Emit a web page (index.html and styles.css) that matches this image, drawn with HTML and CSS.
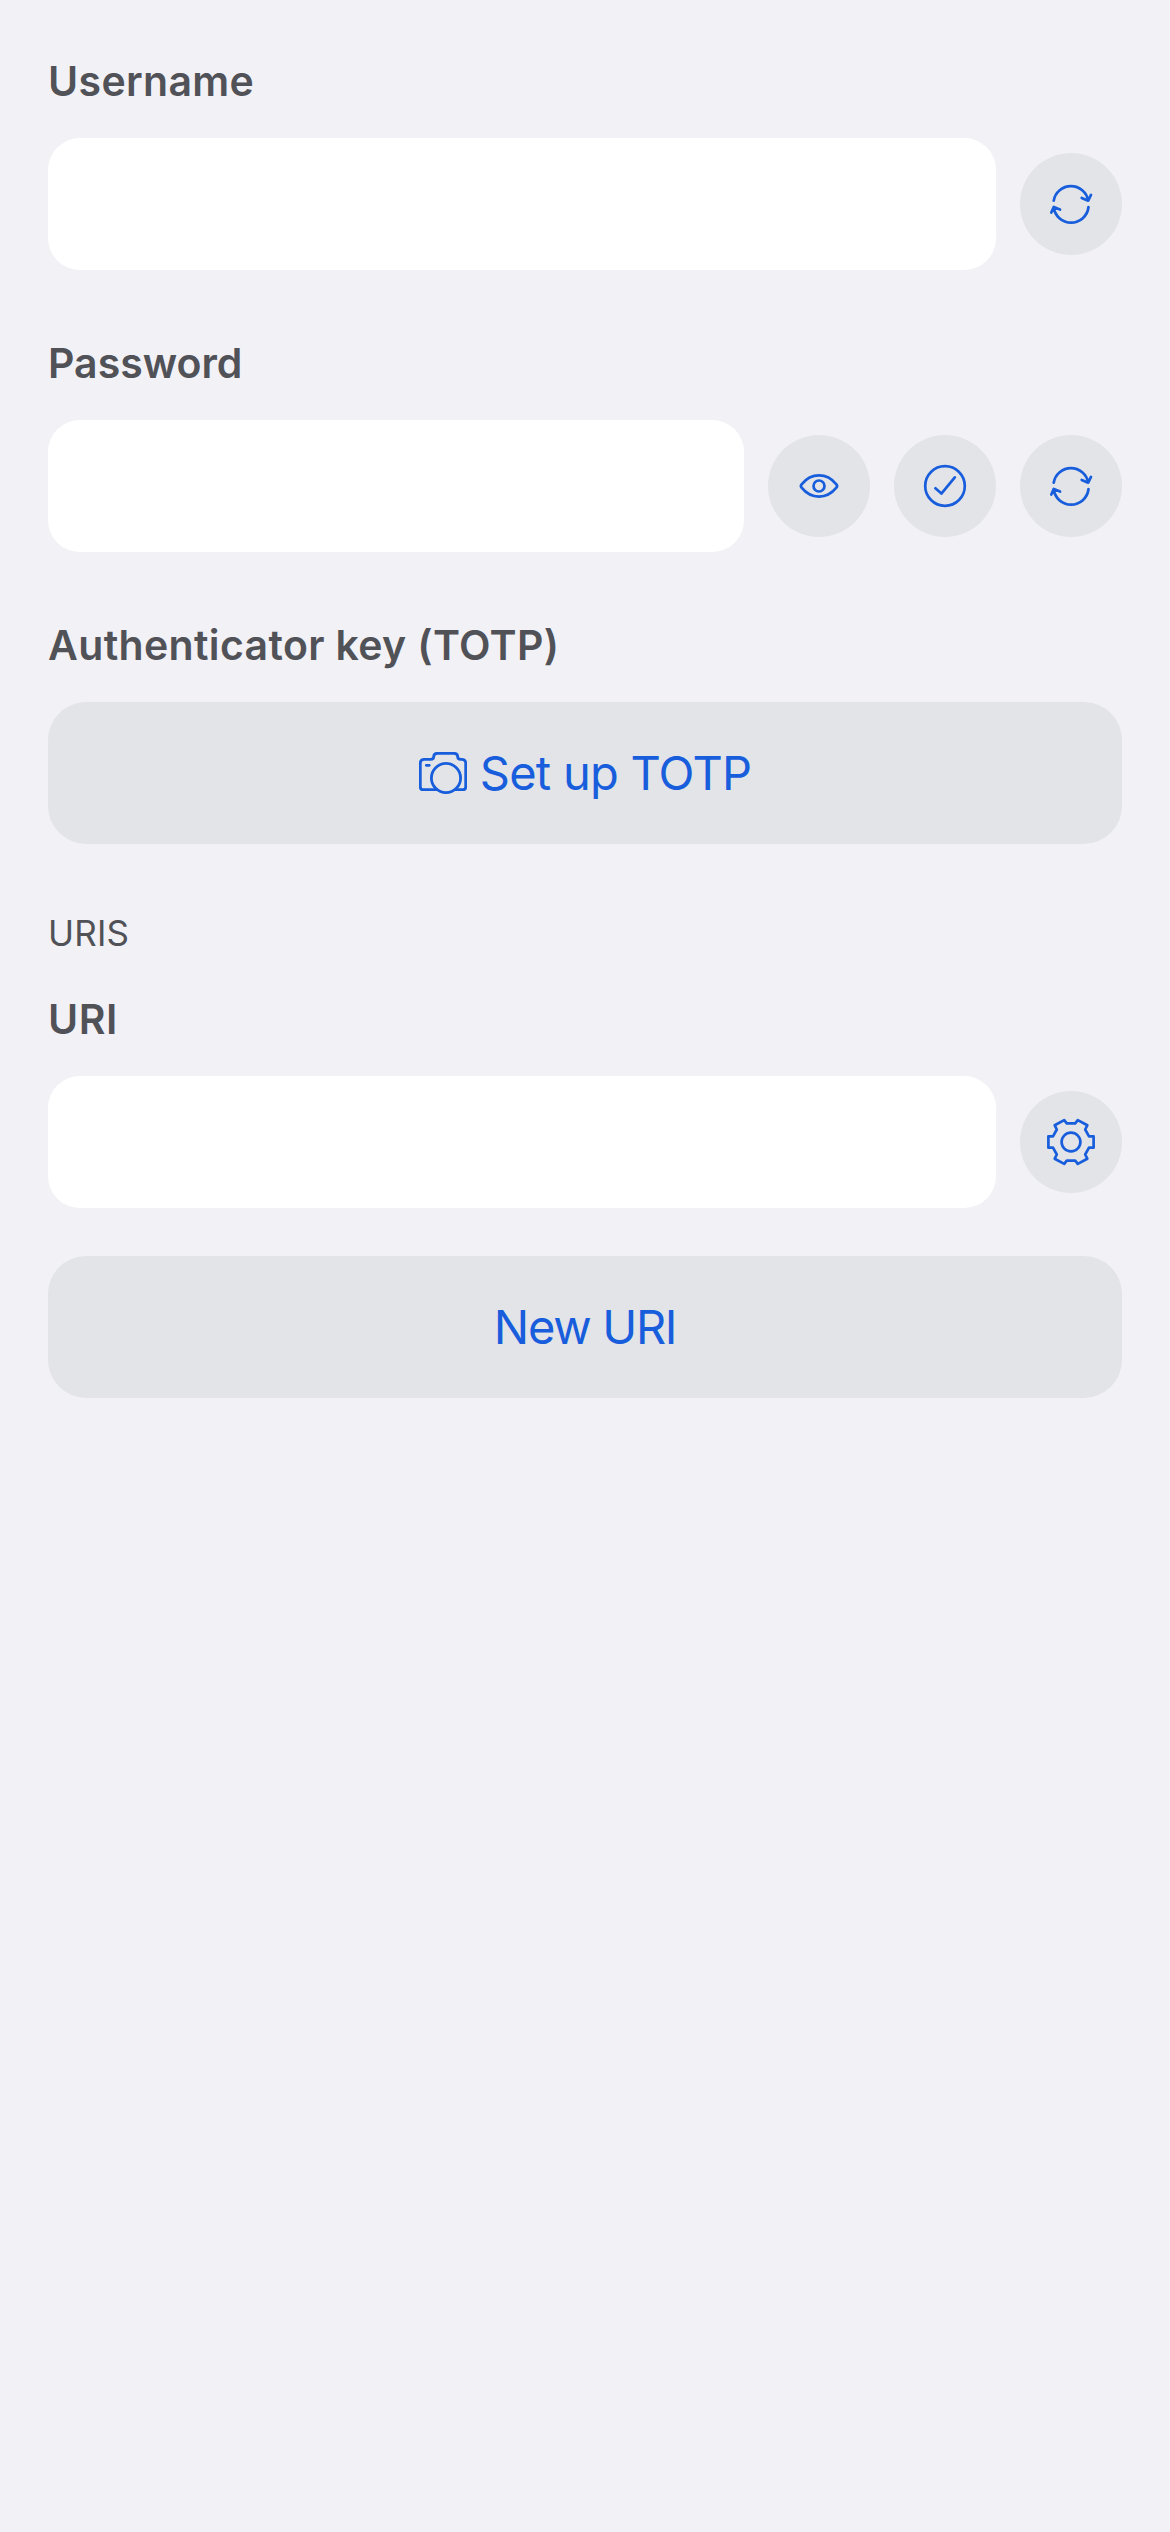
FILE: index.html
```html
<!DOCTYPE html>
<html lang="en">
<head>
<meta charset="utf-8">
<title>New login</title>
<link rel="stylesheet" href="styles.css">
</head>
<body>
<main class="form">
  <section class="group">
    <label class="label label-username" for="username">Username</label>
    <div class="row">
      <input class="field" id="username" type="text">
      <button class="round" aria-label="Generate username">
        <svg class="icon" viewBox="0 0 102 102"><path d="M33.7 47.7A17.5 17.5 0 0 1 68.2 47.7M61.7 44.9L68.2 47.7L71 41.9M68.5 54A17.5 17.5 0 0 1 33.7 54M31.3 59.5L33.8 53.9L40 56.6"/></svg>
      </button>
    </div>
  </section>
  <section class="group">
    <label class="label label-password" for="password">Password</label>
    <div class="row">
      <input class="field" id="password" type="password">
      <button class="round" aria-label="Show password">
        <svg class="icon" viewBox="0 0 102 102"><path d="M33.6 49.3C43.2 37.4 58.8 37.4 68.4 49.3Q69.8 51 68.4 52.7C58.8 64.6 43.2 64.6 33.6 52.7Q32.2 51 33.6 49.3Z"/><circle cx="51" cy="51" r="5.5"/></svg>
      </button>
      <button class="round" aria-label="Check password">
        <svg class="icon" viewBox="0 0 102 102"><circle cx="51" cy="51" r="19.8"/><path d="M41.4 53.3L47.4 58.6L60.8 42.4"/></svg>
      </button>
      <button class="round" aria-label="Generate password">
        <svg class="icon" viewBox="0 0 102 102"><path d="M33.7 47.7A17.5 17.5 0 0 1 68.2 47.7M61.7 44.9L68.2 47.7L71 41.9M68.5 54A17.5 17.5 0 0 1 33.7 54M31.3 59.5L33.8 53.9L40 56.6"/></svg>
      </button>
    </div>
  </section>
  <section class="group">
    <h2 class="label label-totp">Authenticator key (TOTP)</h2>
    <button class="wide">
      <svg class="camera" viewBox="0 0 48 42"><path d="M17.5 37.7H4.3Q1.3 37.7 1.3 34.7V11.3Q1.3 7.3 5.3 7.3H11.7Q14.7 7.3 14.7 4.8Q14.7 1.3 18.7 1.3H34.7Q38.7 1.3 38.7 4.8Q38.7 7.3 41.7 7.3H42.7Q46.7 7.3 46.7 11.3V34.7Q46.7 37.7 43.7 37.7H36.5M7.3 13.3H10.3"/><circle cx="27" cy="26" r="14.6"/></svg>
      <span class="setup-text">Set up TOTP</span>
    </button>
  </section>
  <section class="uris">
    <h2 class="heading">URIS</h2>
    <label class="label label-uri" for="uri">URI</label>
    <div class="row">
      <input class="field" id="uri" type="text">
      <button class="round" aria-label="URI options">
        <svg class="icon" viewBox="0 0 102 102"><path d="M34.7 34.3L44.2 29.1L46.8 32.4H55.2L57.8 29.1L67.3 34.3L65.2 38.5L69 45.3H73.6V56.7H69L65.2 63.5L67.3 67.7L57.8 72.9L55.2 69.6H46.8L44.2 72.9L34.7 67.7L36.8 63.5L33 56.7H28.4V45.3H33L36.8 38.5Z"/><circle cx="51" cy="51" r="9.4"/></svg>
      </button>
    </div>
    <button class="wide new-uri"><span class="new-text">New URI</span></button>
  </section>
</main>
</body>
</html>
```
FILE: styles.css
```css
* { box-sizing: border-box; }
body {
  margin: 0;
  min-height: 2532px;
  background: #f2f1f6;
  color: #515258;
  font-family: Inter, "Liberation Sans", sans-serif;
}
button, input { border: 0; padding: 0; margin: 0; font: inherit; }
.form {
  display: flex;
  flex-direction: column;
  padding: 56px 48px 0;
}
.group { height: 282px; }
.label {
  display: block;
  height: 50px;
  margin: 0 0 32px;
  font-size: 41px;
  font-weight: 600;
  line-height: 50px;
  white-space: nowrap;
}
.label-username { letter-spacing: 0.35px; }
.label-totp { letter-spacing: 0.35px; }
.label-uri { letter-spacing: 0.6px; }
.row { display: flex; align-items: center; gap: 24px; }
.field {
  flex: 1;
  min-width: 0;
  height: 132px;
  border-radius: 32px;
  background: #fff;
  padding: 0 36px;
  font-size: 47px;
}
.round {
  flex: none;
  width: 102px;
  height: 102px;
  border-radius: 50%;
  background: #e2e4e8;
}
.icon, .camera {
  display: block;
  fill: none;
  stroke: #175ddc;
  stroke-width: 2.7;
  stroke-linecap: round;
  stroke-linejoin: round;
}
.camera { width: 48px; height: 42px; stroke-width: 2.8; }
.wide {
  display: flex;
  align-items: center;
  justify-content: center;
  gap: 13px;
  width: 100%;
  height: 142px;
  border-radius: 38px;
  background: #e2e4e8;
  color: #175ddc;
  font-size: 47px;
  line-height: 60px;
}
.setup-text { letter-spacing: -0.75px; }
.new-text { letter-spacing: -1.3px; }
.heading {
  height: 44px;
  margin: 9px 0 39px;
  font-size: 35px;
  font-weight: 400;
  line-height: 44px;
  letter-spacing: 0.2px;
}
.new-uri { margin-top: 48px; }
```
